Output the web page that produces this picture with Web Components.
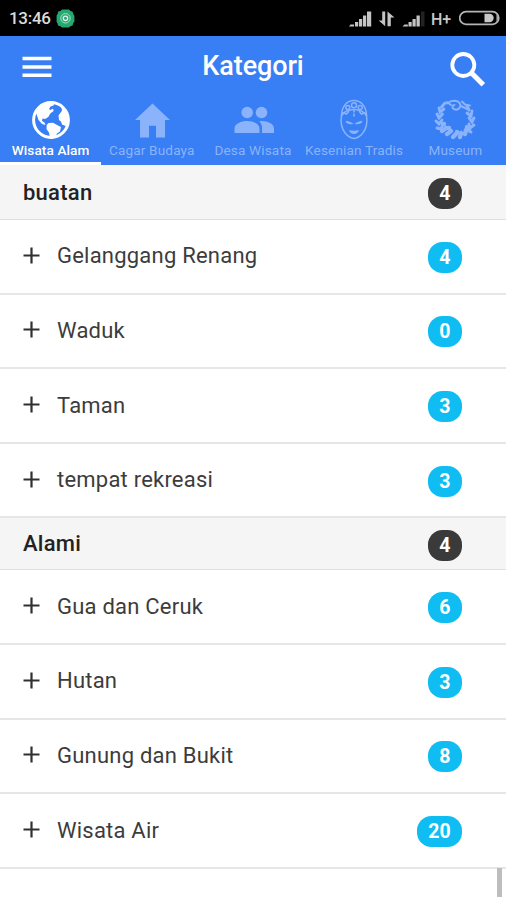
<!DOCTYPE html>
<html lang="id">
<head>
<meta charset="utf-8">
<title>Kategori</title>
<style>
html,body{margin:0;padding:0}
body{width:506px;height:900px;overflow:hidden;background:#fff;font-family:Roboto,"Liberation Sans",sans-serif}
</style>
</head>
<body>
<category-app></category-app>
<script>
function define(name, html, setup) {
  customElements.define(name, class extends HTMLElement {
    connectedCallback() {
      if (this.shadowRoot) return;
      const t = document.createElement('template');
      t.innerHTML = html;
      this.attachShadow({mode: 'open'}).appendChild(t.content.cloneNode(true));
      if (setup) setup(this, this.shadowRoot);
    }
  });
}

define('status-bar', `<style>
:host{display:flex;height:36px;background:#000;color:#dcdcdc;align-items:center;box-sizing:border-box;padding:0 6px 0 9px}
.time{font-size:17px;font-weight:500;width:47px;letter-spacing:-.3px;line-height:36px;white-space:nowrap}
svg{display:block;flex:none}
.sp{flex:1}
.net{font-size:16px;font-weight:500;margin:2px 6px 0 1px;width:22px;color:#c8c8c8;white-space:nowrap}
</style>
<span class="time">13:46</span>
<svg width="19" height="19" viewBox="0 0 19 19"><path d="M6 .6h7l1.600 1.500 2 .6.8 2.500 1 1.500v6l-1.200 1.400-.6 2.300-2.300.8L13 18.400H6l-1.500-1.200-2.500-.8-.5-2.200L.6 13V6.500l1-1.600.6-2.300 2.300-.7z" fill="#26a871"/><circle cx="9.500" cy="9.300" r="4.700" fill="none" stroke="#a9dfc5" stroke-width="1"/><circle cx="9.500" cy="9.300" r="2.200" fill="none" stroke="#dff5ea" stroke-width="1.300"/></svg>
<span class="sp"></span>
<svg width="83" height="18" viewBox="0 0 83 18"><g fill="#c4c4c4"><path d="M3.500 15.500H7v2H2z"/><path d="M8 13h3.200v4.500H8zM12 10h3.200v7.500H12zM16 6.500h3.200v11H16zM20 2.500h4.200v15H20z"/><path d="M38.200 2.500v14.700l-6.500-5.700h3.500v-9zM40.500 17.200V2.500l7 6h-3.700v8.700z"/><path d="M57.500 15.500h3.300v2H55.500z"/><path d="M61.500 13h3.200v4.500h-3.200zM65.500 10h3.200v7.500h-3.200zM69.500 6.500h3.300v11h-3.300z"/></g><path d="M74 2.500h3.500v15H74z" fill="#222"/></svg>
<span class="net">H+</span>
<svg width="41" height="16" viewBox="0 0 41 16"><path d="M7 1.700h26.500a6.300 6.300 0 0 1 0 12.600H7A6.300 6.300 0 0 1 7 1.700z" fill="none" stroke="#b4b4b4" stroke-width="1.700"/><path d="M25.500 3.800h5a4.200 4.200 0 0 1 0 8.400h-5z" fill="#c8c8c8"/><path d="M37.500 3.500q3 4.500 0 9z" fill="#b4b4b4"/></svg>`);

define('title-bar', `<style>
:host{display:grid;grid-template-columns:50px 1fr 50px;height:62px;box-sizing:border-box;padding:0 12px;color:#fff;align-items:center}
h1{margin:-3px 0 0;font-size:27px;line-height:30px;font-weight:500;text-align:center;white-space:nowrap;letter-spacing:-.1px}
svg{display:block}
</style>
<svg width="50" height="62" viewBox="0 0 50 62"><path d="M10.500 22.500h29M10.500 31h29M10.500 39.300h29" stroke="#fff" stroke-width="3.400"/></svg>
<h1><slot></slot></h1>
<svg width="50" height="62" viewBox="0 0 50 62"><circle cx="19.300" cy="29" r="11" fill="none" stroke="#fff" stroke-width="3.800"/><path d="M27.300 36.700L39.300 48.700" stroke="#fff" stroke-width="5" fill="none"/></svg>`);

const icons = {
  globe: `<circle cx="22" cy="22" r="17.400" fill="none" stroke="currentColor" stroke-width="3"/><path fill="currentColor" d="M12 7.500L17 4l7-.8 1.500 1.500-1 2.700-3 1-1.500 2.600 1.500 1 2.500-1.500.6 2.500-3.300 2.600-2 3.500-3.300 2-2.500-.5-.5 2.500 2.500 1.500 1 2.500-3.500-1-3.500-4-1.700-5-.8-1.500 1.500-5zM19.500 25l4.500-.3 5 2.800 3 1.500-1 4.500-3 2-2 4-3.500 1.500-1.500-1-1-5.500-2.500-3.500.2-4zM32.500 9l3 1.500 4 7 .5 6-1.500 6-3-2-2.500-1-1-3-2-1.500-.5-4.500 2.500-3.500 1-1.500z"/>`,
  home: `<path fill="currentColor" d="M22.500 5.500L5 22h5v17.500h9V27.700h7v11.800h9V22h5z"/>`,
  people: `<g fill="currentColor"><circle cx="16.200" cy="14.500" r="5.800"/><circle cx="30.500" cy="14.500" r="5.800"/><path d="M3.500 35v-4.500c0-5 7-7.500 12.700-7.500s12.300 2.500 12.300 7.500V35zM31 35v-5c0-3-1-5-2.500-6.800C35.500 22.500 43 25.500 43 30.500V35z"/></g>`,
  mask: `<g fill="none" stroke="currentColor" stroke-width="1.500"><path d="M9.500 17c-1 7 0 14 4 18.500q4 4.500 8.500 5 4.500-.5 8.500-5c4-4.500 5-11.500 4-18.500"/><path d="M9.500 18c0-9 5-15.500 12.500-15.500S34.500 9 34.500 18c-2-4-6-6.500-12.500-6.500S11.500 14 9.500 18z"/><circle cx="22" cy="7.200" r="2.500"/><circle cx="15.800" cy="9.400" r="2"/><circle cx="28.200" cy="9.400" r="2"/><path d="M10.500 14.500l4 1.500 2.500-3M33.500 14.500l-4 1.500-2.500-3M22 11.500v3M14 23.500q3 .5 5.500 2-3 .5-5.500-2M30 23.500q-3 .5-5.500 2 3 .5 5.500-2"/></g><path fill="currentColor" d="M21.200 15.500h1.600v3h-1.600zM17 32q5 1.500 10 0-1.300 4-5 4t-5-4z"/>`,
  wreath: `<g fill="none" stroke="currentColor" stroke-linecap="round"><path stroke-width="2" d="M14 5.500q5-4 11-2 4 3 1.500 6.500-3 3-6.500.5-1.500-3 1.500-3.500M14 4l4 3M29 3.500l3 3 5 1M28 8l6 3"/><path stroke-width="2.900" d="M12 5l-3.500 4M6 10l1 4 4-3M4 16l2 4 3.500-4M3 23l3 3 3-4M4 30l4 1 1.500-4M34 8l2 4M39 13l-1 5-4-3M41 20l-2 4-3-4M41 27l-4 3-1-4M38 34l-4-2"/><path stroke-width="4.400" d="M9 33l4-3M14 36l4-3M20 39l3-3M27 39l1-4M32 36l1-4M36 31l-2-2M15 30l1 0M11 26l-1 0M24 34l0 0"/></g>`
};

define('tab-item', `<style>
:host{display:flex;flex-direction:column;align-items:center;box-sizing:border-box;height:67px;width:101.200px;color:#8ab3fb}
:host([active]){color:#fff;border-bottom:3px solid #fff}
svg{display:block;flex:none}
span{font-size:13.600px;line-height:16px;white-space:nowrap;letter-spacing:.15px}
:host([active]) span{font-weight:500;letter-spacing:.1px}
</style><svg width="44" height="44" viewBox="0 0 44 44"></svg><span><slot></slot></span>`,
(el, root) => { root.querySelector('svg').innerHTML = icons[el.getAttribute('icon')]; });

define('count-badge', `<style>
:host{display:flex;box-sizing:border-box;height:31px;min-width:34px;padding:0 11px;border-radius:14.500px;align-items:center;justify-content:center;background:var(--badge,#10bdf2);color:#fff;font-weight:700;font-size:19.500px;line-height:31px;letter-spacing:.2px}
</style><slot></slot>`);

define('group-header', `<style>
:host{display:flex;box-sizing:border-box;align-items:center;background:#f5f5f5;border-bottom:1.500px solid #dedede;height:var(--h,52px);padding:3px 44px 0 23px;--badge:#3a3a3a}
h2{margin:-2px 0 0;flex:1;font-size:22px;line-height:28px;font-weight:500;color:#222;letter-spacing:.25px}
</style><h2><slot></slot></h2><count-badge></count-badge>`,
(el, root) => { root.querySelector('count-badge').textContent = el.getAttribute('count'); });

define('category-row', `<style>
:host{display:flex;box-sizing:border-box;align-items:center;height:74.600px;border-bottom:2px solid #e6e6e6;padding:2px 44px 0 23px}
svg{display:block;width:17px;height:17px;margin:-4px 17px 0 0}
span{flex:1;font-size:22px;line-height:28px;color:#3c3c3c;letter-spacing:.22px;margin-top:-1.700px}
</style><svg viewBox="0 0 17 17"><path d="M8.500 .5v16M.5 8.500h16" stroke="#303030" stroke-width="2.200"/></svg><span><slot></slot></span><count-badge></count-badge>`,
(el, root) => { root.querySelector('count-badge').textContent = el.getAttribute('count'); });

define('category-app', `<style>
:host{display:block;width:506px;height:900px;position:relative;background:#fff;overflow:hidden}
header{background:#387ef5;height:129px}
nav{display:flex}
tab-item{flex:none}
main{display:flex;flex-direction:column}
main>*{flex:none}
.thumb{position:absolute;right:4px;top:868px;width:5px;height:29px;background:#bdbdbd}
</style>
<status-bar></status-bar>
<header>
<title-bar>Kategori</title-bar>
<nav>
<tab-item icon="globe" active>Wisata Alam</tab-item>
<tab-item icon="home">Cagar Budaya</tab-item>
<tab-item icon="people">Desa Wisata</tab-item>
<tab-item icon="mask">Kesenian Tradis</tab-item>
<tab-item icon="wreath">Museum</tab-item>
</nav>
</header>
<main>
<group-header count="4" style="--h:55px">buatan</group-header>
<category-row count="4">Gelanggang Renang</category-row>
<category-row count="0">Waduk</category-row>
<category-row count="3">Taman</category-row>
<category-row count="3">tempat rekreasi</category-row>
<group-header count="4">Alami</group-header>
<category-row count="6">Gua dan Ceruk</category-row>
<category-row count="3">Hutan</category-row>
<category-row count="8">Gunung dan Bukit</category-row>
<category-row count="20">Wisata Air</category-row>
</main>
<div class="thumb"></div>`);
</script>
</body>
</html>
